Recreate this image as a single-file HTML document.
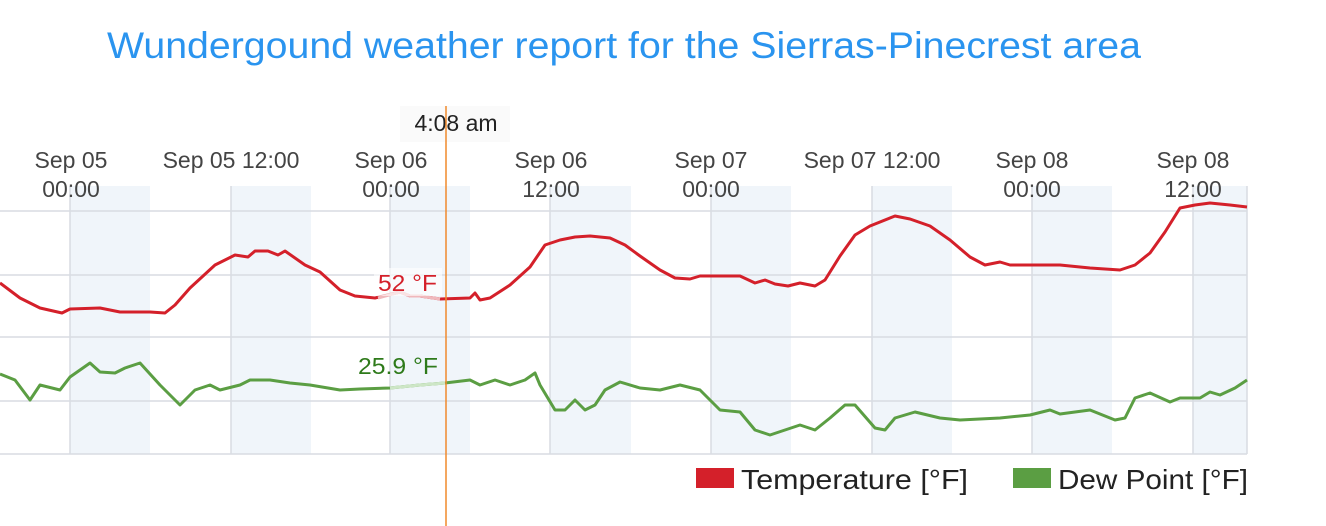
<!DOCTYPE html>
<html><head><meta charset="utf-8"><style>
html,body{margin:0;padding:0;background:#fff;width:1326px;height:526px;overflow:hidden}
svg{display:block}
</style></head><body>
<svg width="1326" height="526" xmlns="http://www.w3.org/2000/svg" font-family="'Liberation Sans', sans-serif">
<text x="107" y="58" font-size="37" fill="#2a94ef" textLength="1034" lengthAdjust="spacingAndGlyphs">Wundergound weather report for the Sierras-Pinecrest area</text>
<g fill="#f0f5fa">
<rect x="70" y="186" width="80" height="268"/><rect x="231" y="186" width="80" height="268"/>
<rect x="390" y="186" width="80" height="268"/><rect x="550" y="186" width="81" height="268"/>
<rect x="711" y="186" width="80" height="268"/><rect x="872" y="186" width="80" height="268"/>
<rect x="1032" y="186" width="80" height="268"/><rect x="1193" y="186" width="54" height="268"/>
</g>
<g stroke="#d8dce2" stroke-width="1.5">
<line x1="0" y1="211" x2="1247" y2="211"/><line x1="0" y1="275" x2="1247" y2="275"/>
<line x1="0" y1="337" x2="1247" y2="337"/><line x1="0" y1="401" x2="1247" y2="401"/>
<line x1="0" y1="454" x2="1247" y2="454"/>
<line x1="70" y1="186" x2="70" y2="454"/><line x1="231" y1="186" x2="231" y2="454"/>
<line x1="390" y1="186" x2="390" y2="454"/><line x1="550" y1="186" x2="550" y2="454"/>
<line x1="711" y1="186" x2="711" y2="454"/><line x1="872" y1="186" x2="872" y2="454"/>
<line x1="1032" y1="186" x2="1032" y2="454"/><line x1="1193" y1="186" x2="1193" y2="454"/>
<line x1="1247" y1="186" x2="1247" y2="454"/>
</g>
<g font-size="23" fill="#444" text-anchor="middle">
<text x="71" y="168">Sep 05</text><text x="71" y="197">00:00</text>
<text x="231" y="168">Sep 05 12:00</text>
<text x="391" y="168">Sep 06</text><text x="391" y="197">00:00</text>
<text x="551" y="168">Sep 06</text><text x="551" y="197">12:00</text>
<text x="711" y="168">Sep 07</text><text x="711" y="197">00:00</text>
<text x="872" y="168">Sep 07 12:00</text>
<text x="1032" y="168">Sep 08</text><text x="1032" y="197">00:00</text>
<text x="1193" y="168">Sep 08</text><text x="1193" y="197">12:00</text>
</g>
<rect x="400" y="106" width="110" height="36" fill="#fafafa"/>
<text x="456" y="131" text-anchor="middle" font-size="23" fill="#222">4:08 am</text>
<polyline fill="none" stroke="#d4202a" stroke-width="3" stroke-linejoin="round" points="0,283 20,298 40,308 62,313 70,309 100,308 120,312 150,312 165,313 175,305 190,288 215,265 235,255 248,257 255,251 268,251 278,255 285,251 305,265 320,272 340,290 355,296 375,298 400,292 410,296 420,296 440,299 470,298 475,293 480,300 490,298 510,285 530,267 545,245 560,240 575,237 590,236 610,238 625,245 640,256 660,270 675,278 690,279 700,276 720,276 740,276 755,283 765,280 775,284 788,286 800,283 815,286 825,280 840,256 855,235 870,226 895,216 910,219 930,226 950,240 970,257 985,265 1000,262 1010,265 1040,265 1060,265 1090,268 1120,270 1135,265 1150,253 1165,232 1180,208 1195,205 1210,203 1230,205 1247,207"/>
<polyline fill="none" stroke="#f0b8bc" stroke-width="3" points="378,298 400,292 410,296 420,296 440,299"/>
<polyline fill="none" stroke="#5b9e43" stroke-width="3" stroke-linejoin="round" points="0,374 15,380 30,400 40,385 60,390 70,377 90,363 100,372 115,373 125,368 140,363 160,385 180,405 195,390 210,385 220,390 240,385 250,380 270,380 290,383 310,385 340,390 360,389 390,388 420,385 445,383 470,380 480,385 495,380 510,385 525,380 535,373 540,385 555,410 565,410 575,400 585,410 595,405 605,390 620,382 640,388 660,390 680,385 700,390 720,410 740,412 755,430 770,435 785,430 800,425 815,430 830,418 845,405 855,405 875,428 885,430 895,418 915,412 940,418 960,420 1000,418 1030,415 1050,410 1060,414 1090,410 1115,420 1125,418 1135,398 1150,393 1170,402 1180,398 1200,398 1210,392 1220,395 1235,388 1247,380"/>
<polyline fill="none" stroke="#cde6c6" stroke-width="3" points="390,388 420,385 445,383"/>
<rect x="374" y="268" width="68" height="28" fill="#fff" opacity="0.6"/>
<text x="378" y="291" font-size="23" fill="#d4202a" textLength="59" lengthAdjust="spacingAndGlyphs">52 °F</text>
<text x="358" y="374" font-size="23" fill="#2e7a1a" textLength="80" lengthAdjust="spacingAndGlyphs">25.9 °F</text>
<line x1="446" y1="106" x2="446" y2="526" stroke="#f08a2c" stroke-width="1.5"/>
<rect x="696" y="468" width="38" height="20" fill="#d4202a"/>
<text x="741" y="489" font-size="28" fill="#222" textLength="227" lengthAdjust="spacingAndGlyphs">Temperature [°F]</text>
<rect x="1013" y="468" width="38" height="20" fill="#5b9e43"/>
<text x="1058" y="489" font-size="28" fill="#222" textLength="190" lengthAdjust="spacingAndGlyphs">Dew Point [°F]</text>
</svg>
</body></html>
